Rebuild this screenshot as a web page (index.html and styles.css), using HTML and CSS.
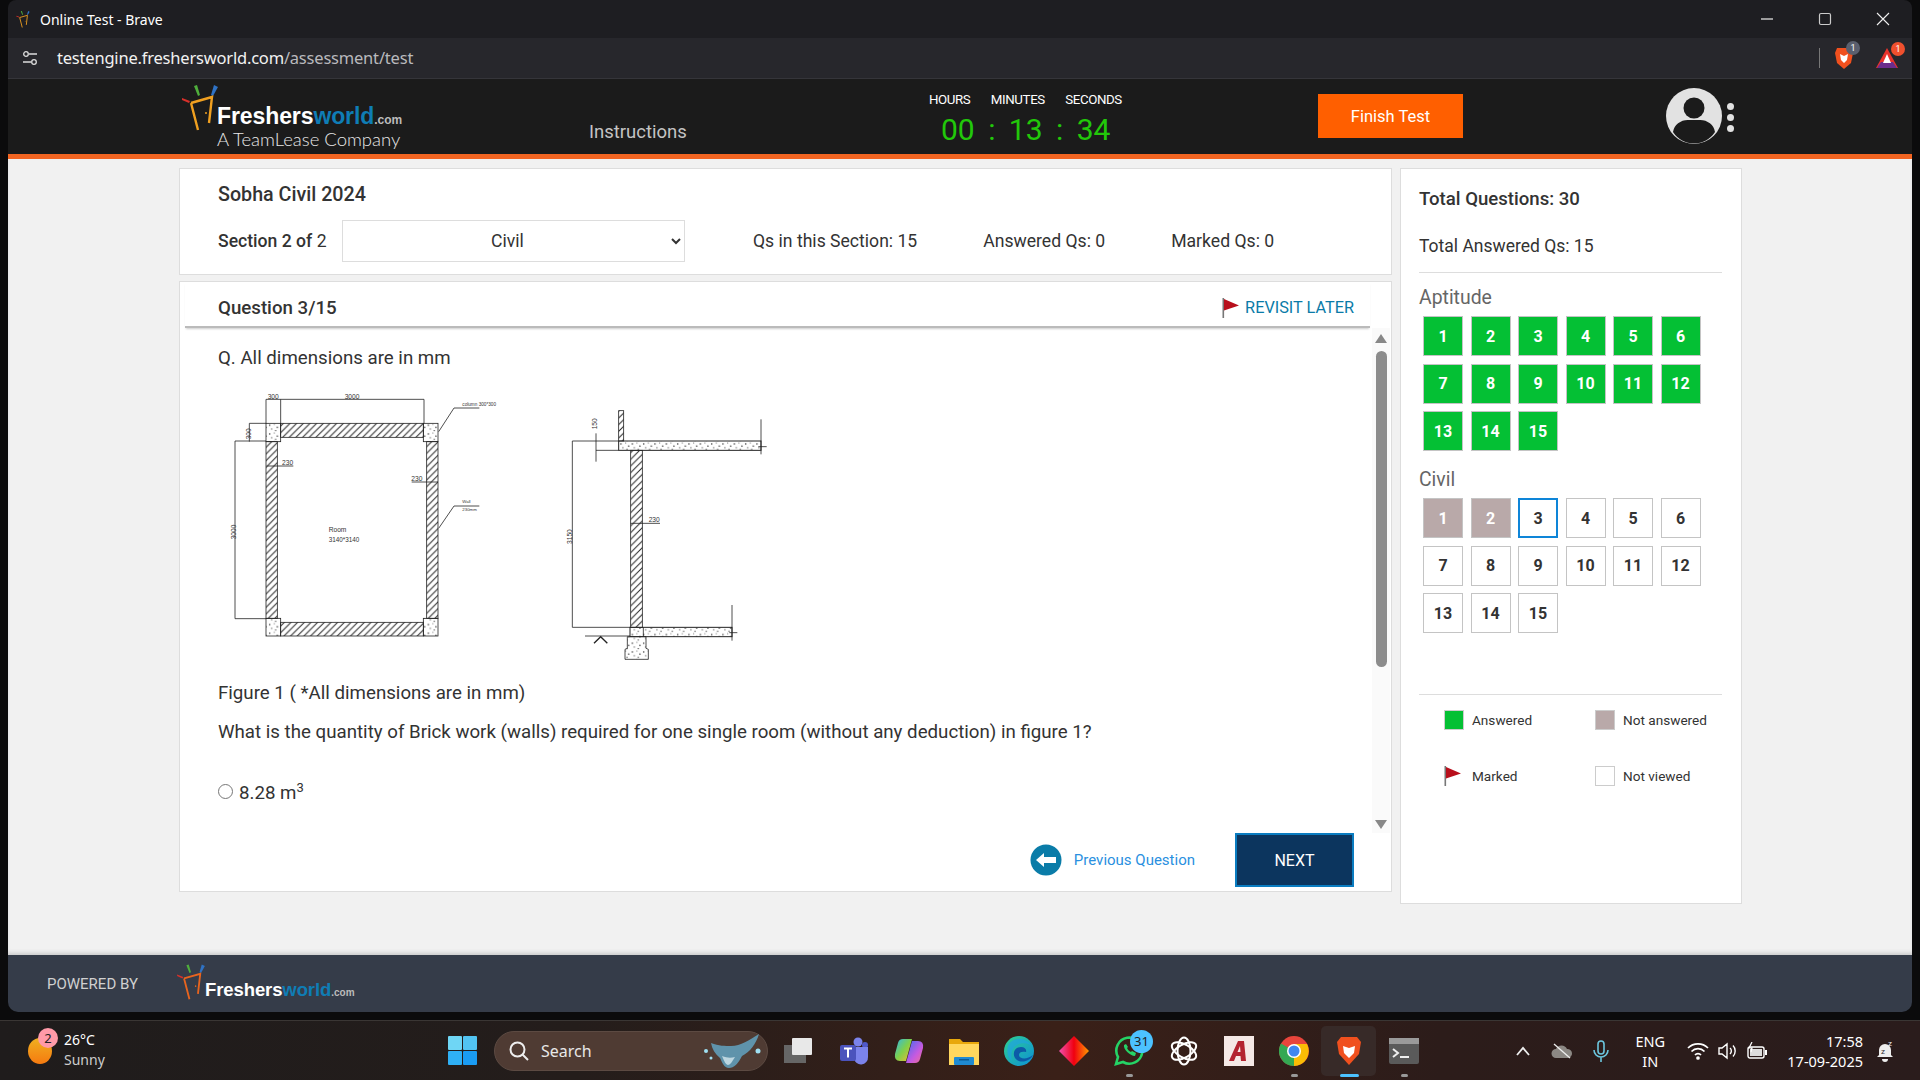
FILE: index.html
```html
<!DOCTYPE html>
<html lang="en">

<head>
    <meta charset="UTF-8">
    <meta name="viewport" content="width=device-width, initial-scale=1.0">
    <title>Online Test</title>
    <link rel="stylesheet" href="styles.css">
</head>

<body>
    <svg class="defs" width="0" height="0">
        <defs>
            <symbol id="door" viewBox="0 0 38 48">
                <path d="M1 15l8 3-1 2-7-3z" fill="#d8302a" />
                <path d="M13 3l3-1 3 10-2 1z" fill="#4fae3c" />
                <path d="M33 2l4 2-5 9-2-1z" fill="#2f72c4" />
                <path d="M10 20l7 27M10 20l21-6-3 26" fill="none" stroke="currentColor" stroke-width="2.4" />
                <circle cx="25" cy="30" r="1" fill="currentColor" />
            </symbol>
            <symbol id="flag" viewBox="0 0 17 20">
                <rect x="0.5" y="0" width="1.6" height="20" fill="#777" />
                <path d="M2 1l15 6.500-15 5z" fill="#b80f1c" />
            </symbol>
            <pattern id="hatch" patternUnits="userSpaceOnUse" width="20" height="20">
                <path d="M-2 22L22 -2M-2 2L2 -2M18 22L22 18" stroke="#222" stroke-width="3" />
            </pattern>
            <pattern id="speck" patternUnits="userSpaceOnUse" width="34" height="26">
                <circle cx="5" cy="6" r="2.200" fill="#222" />
                <circle cx="19" cy="3" r="1.600" fill="#444" />
                <circle cx="28" cy="12" r="2.200" fill="#222" />
                <circle cx="11" cy="17" r="1.800" fill="#444" />
                <circle cx="23" cy="22" r="2" fill="#222" />
            </pattern>
        </defs>
    </svg>

    <div class="window">
        <div class="titlebar">
            <svg class="tab-icon" width="14" height="20"><use href="#door" /></svg>
            <span class="tab-title">Online Test - Brave</span>
            <div class="win-controls">
                <svg width="14" height="14" viewBox="0 0 14 14"><path d="M1 7h12" stroke="#eee" stroke-width="1.200" /></svg>
                <svg width="14" height="14" viewBox="0 0 14 14"><rect x="1.500" y="1.500" width="11" height="11" rx="1.500" fill="none" stroke="#ccc" stroke-width="1.200" /></svg>
                <svg width="14" height="14" viewBox="0 0 14 14"><path d="M1 1l12 12M13 1L1 13" stroke="#eee" stroke-width="1.100" /></svg>
            </div>
        </div>

        <div class="addressbar">
            <svg class="site-icon" width="16" height="16" viewBox="0 0 16 16" fill="none" stroke="#ddd" stroke-width="1.300">
                <circle cx="4" cy="4" r="2.300" /><path d="M7 4h8M1 12h8" /><circle cx="12" cy="12" r="2.300" />
            </svg>
            <span class="url">testengine.freshersworld.com<span class="url-path">/assessment/test</span></span>
            <div class="ext-icons">
                <span class="ext-sep"></span>
                <div class="ext">
                    <svg width="20" height="24" viewBox="0 0 20 24"><path d="M3 2h14l2 5-2 10-7 6-7-6L1 7z" fill="#f0501e" /><path d="M6 8l4 2 4-2-1 6-3 3-3-3z" fill="#fff" /></svg>
                    <span class="ext-badge ext-badge-grey">1</span>
                </div>
                <div class="ext">
                    <svg width="24" height="22" viewBox="0 0 24 22"><path d="M12 1l11 20H1z" fill="#e8322c" /><path d="M2 21l4-6h12l4 6z" fill="#6b2d8c" /><path d="M12 7l4 9H8z" fill="#fff" /></svg>
                    <span class="ext-badge ext-badge-red">1</span>
                </div>
            </div>
        </div>

        <header class="app-header">
            <div class="logo">
                <svg class="logo-door" width="38" height="48"><use href="#door" /></svg>
                <div class="logo-text">
                    <div class="logo-name">Freshers<span class="blue">world</span><span class="dotcom">.com</span></div>
                    <div class="logo-sub">A TeamLease Company</div>
                </div>
            </div>
            <a class="instructions">Instructions</a>
            <div class="timer">
                <div class="timer-labels"><span>HOURS</span><span>MINUTES</span><span>SECONDS</span></div>
                <div class="timer-digits">00 : 13 : 34</div>
            </div>
            <button class="finish-btn">Finish Test</button>
            <svg class="avatar" width="56" height="56" viewBox="0 0 56 56">
                <circle cx="28" cy="28" r="28" fill="#e2e2e2" />
                <circle cx="28" cy="20" r="10.500" fill="#1b1b1b" />
                <path d="M7 44a15 14 0 0 1 15-12h12a15 14 0 0 1 15 12 25 25 0 0 1-42 0z" fill="#1b1b1b" />
            </svg>
            <div class="kebab"><i></i><i></i><i></i></div>
        </header>

        <div class="content">
            <div class="main-col">
                <section class="card test-info">
                    <h2 class="test-name">Sobha Civil 2024</h2>
                    <div class="section-row">
                        <span class="section-label"><b>Section 2 of</b> 2</span>
                        <select class="section-select"><option>Civil</option></select>
                        <span class="stat stat-first">Qs in this Section: 15</span>
                        <span class="stat">Answered Qs: 0</span>
                        <span class="stat">Marked Qs: 0</span>
                    </div>
                </section>

                <section class="card question">
                    <div class="q-head">
                        <h3>Question 3/15</h3>
                        <a class="revisit"><svg width="17" height="20"><use href="#flag" /></svg>REVISIT LATER</a>
                    </div>
                    <div class="q-body">
                        <div class="q-scroll">
                            <p class="q-line q-first">Q. All dimensions are in mm</p>
                            <div class="figures">
                                <svg class="fig-plan" width="320" height="280" viewBox="0 0 960 840" fill="none" stroke="#222" stroke-width="2.400">
                                    <rect x="242" y="130" width="428" height="42" fill="url(#hatch)" />
                                    <rect x="242" y="727" width="428" height="41" fill="url(#hatch)" />
                                    <rect x="198" y="185" width="34" height="530" fill="url(#hatch)" />
                                    <rect x="680" y="185" width="34" height="530" fill="url(#hatch)" />
                                    <rect x="198" y="130" width="44" height="55" fill="url(#speck)" />
                                    <rect x="670" y="130" width="44" height="55" fill="url(#speck)" />
                                    <rect x="198" y="715" width="44" height="53" fill="url(#speck)" />
                                    <rect x="670" y="715" width="44" height="53" fill="url(#speck)" />
                                    <path d="M198 130V58H672V130M242 58V130M148 130H198M148 130V185M105 183H198M105 183V716H198M200 258H280M635 306H714" />
                                    <path d="M716 155L762 84H838M716 445L762 378H838" />
                                    <g fill="#333" stroke="none">
                                        <text x="203" y="56" font-size="20">300</text>
                                        <text x="434" y="56" font-size="20">3000</text>
                                        <text x="246" y="255" font-size="20">230</text>
                                        <text x="634" y="304" font-size="20">230</text>
                                        <text transform="translate(152 178) rotate(-90)" font-size="20">300</text>
                                        <text transform="translate(107 478) rotate(-90)" font-size="20">3000</text>
                                        <text x="386" y="457" font-size="20">Room</text>
                                        <text x="386" y="487" font-size="19">3140*3140</text>
                                        <text x="787" y="77" font-size="14">column 300*300</text>
                                        <text x="787" y="368" font-size="13">Wall</text>
                                        <text x="787" y="392" font-size="13">230mm</text>
                                    </g>
                                </svg>
                                <svg class="fig-section" width="260" height="280" viewBox="0 0 780 840" fill="none" stroke="#222" stroke-width="2.400">
                                    <rect x="236" y="62" width="15" height="91" fill="url(#hatch)" />
                                    <rect x="236" y="153" width="427" height="28" fill="url(#speck)" stroke-width="3" />
                                    <rect x="272" y="181" width="35" height="531" fill="url(#hatch)" />
                                    <rect x="270" y="712" width="306" height="28" fill="url(#speck)" stroke-width="3" />
                                    <path d="M310 712V740" />
                                    <path d="M262 740H318V775L325 778V808H255V778L262 775Z" fill="url(#speck)" />
                                    <path d="M97 153V712M97 153H236M97 712H270M168 130V215M168 181H236M663 88V193M576 645V752M272 400H360M135 738H270" />
                                    <path d="M655 170H680M568 728H592" />
                                    <path d="M162 760L182 740L202 760" stroke-width="4" />
                                    <g fill="#333" stroke="none">
                                        <text x="326" y="397" font-size="20">230</text>
                                        <text transform="translate(170 118) rotate(-90)" font-size="20">150</text>
                                        <text transform="translate(97 462) rotate(-90)" font-size="20">3150</text>
                                    </g>
                                </svg>
                            </div>
                            <p class="q-line q-caption">Figure 1 ( *All dimensions are in mm)</p>
                            <p class="q-line q-text">What is the quantity of Brick work (walls) required for one single room (without any deduction) in figure 1?</p>
                            <label class="option"><input type="radio" name="answer"><span>8.28 m<sup>3</sup></span></label>
                        </div>
                        <div class="scrollbar">
                            <span class="arrow arrow-up"></span>
                            <span class="thumb"></span>
                            <span class="arrow arrow-down"></span>
                        </div>
                    </div>
                    <div class="q-actions">
                        <a class="prev">
                            <svg width="32" height="32" viewBox="0 0 32 32">
                                <circle cx="16" cy="16" r="15.500" fill="#0a7ca8" />
                                <path d="M6 16l8-7v4h12v6H14v4z" fill="#fff" />
                            </svg>
                            Previous Question
                        </a>
                        <button class="next-btn">NEXT</button>
                    </div>
                </section>
            </div>

            <aside class="card side">
                <div class="side-total">Total Questions: 30</div>
                <div class="side-answered">Total Answered Qs: 15</div>
                <hr class="side-rule">
                <div class="side-heading">Aptitude</div>
                <div class="q-grid">
                    <span class="q-box answered">1</span><span class="q-box answered">2</span><span class="q-box answered">3</span><span class="q-box answered">4</span><span class="q-box answered">5</span><span class="q-box answered">6</span>
                    <span class="q-box answered">7</span><span class="q-box answered">8</span><span class="q-box answered">9</span><span class="q-box answered">10</span><span class="q-box answered">11</span><span class="q-box answered">12</span>
                    <span class="q-box answered">13</span><span class="q-box answered">14</span><span class="q-box answered">15</span>
                </div>
                <div class="side-heading side-heading-civil">Civil</div>
                <div class="q-grid">
                    <span class="q-box skipped">1</span><span class="q-box skipped">2</span><span class="q-box current">3</span><span class="q-box">4</span><span class="q-box">5</span><span class="q-box">6</span>
                    <span class="q-box">7</span><span class="q-box">8</span><span class="q-box">9</span><span class="q-box">10</span><span class="q-box">11</span><span class="q-box">12</span>
                    <span class="q-box">13</span><span class="q-box">14</span><span class="q-box">15</span>
                </div>
                <hr class="side-rule side-rule-legend">
                <div class="legend">
                    <div class="legend-item"><span class="swatch swatch-green"></span>Answered</div>
                    <div class="legend-item"><span class="swatch swatch-grey"></span>Not answered</div>
                    <div class="legend-item"><svg width="17" height="20"><use href="#flag" /></svg><span class="legend-gap"></span>Marked</div>
                    <div class="legend-item"><span class="swatch"></span>Not viewed</div>
                </div>
            </aside>
        </div>

        <footer class="app-footer">
            <span class="powered">POWERED BY</span>
            <svg class="footer-door" width="30" height="37" viewBox="0 0 38 48"><use href="#door" /></svg>
            <div class="footer-name">Freshers<span class="blue">world</span><span class="dotcom">.com</span></div>
        </footer>
    </div>

    <div class="taskbar">
        <div class="weather">
            <span class="sun"></span>
            <span class="weather-badge">2</span>
            <div class="weather-text"><div>26°C</div><div class="muted">Sunny</div></div>
        </div>

        <div class="task-center">
            <svg class="start" width="29" height="29" viewBox="0 0 29 29">
                <rect width="14" height="14" rx="1" fill="#6fd6f5" /><rect x="15" width="14" height="14" rx="1" fill="#52c4f2" />
                <rect y="15" width="14" height="14" rx="1" fill="#2fb0f5" /><rect x="15" y="15" width="14" height="14" rx="1" fill="#1a9cf3" />
            </svg>
            <div class="search">
                <svg width="22" height="22" viewBox="0 0 22 22" fill="none" stroke="#eee" stroke-width="2"><circle cx="9.500" cy="9.500" r="7" /><path d="M14.500 14.500L20 20" /></svg>
                <span>Search</span>
                <svg class="manta" width="58" height="36" viewBox="0 0 58 36">
                    <path d="M8 10c8 3 14 3 20 3 10 0 18-6 28-12-3 10-9 18-17 22-4 8-8 12-13 12-5 0-7-6-9-10C12 21 9 16 8 10z" fill="#5f93ab" />
                    <path d="M19 23c5 2 9 2 13 1-3 5-5 8-7 8s-4-4-6-9z" fill="#bcd6e0" />
                    <circle cx="3" cy="18" r="2" fill="#9fe0f2" /><circle cx="55" cy="18" r="2.500" fill="#9fe0f2" /><circle cx="8" cy="25" r="1.500" fill="#9fe0f2" />
                </svg>
            </div>
            <div class="tasks">
                <div class="task"><svg width="30" height="28" viewBox="0 0 30 28"><rect x="0" y="8" width="22" height="18" fill="#666" /><rect x="8" y="1" width="20" height="17" rx="1" fill="#e8e8e8" /></svg></div>
                <div class="task"><svg width="30" height="30" viewBox="0 0 30 30"><circle cx="19" cy="6" r="4.500" fill="#7b83eb" /><circle cx="26" cy="9" r="3" fill="#5059c9" /><path d="M14 11h15v10a7 7 0 0 1-14 1z" fill="#7b83eb" /><rect x="1" y="9" width="16" height="16" rx="2" fill="#4b53bc" /><path d="M5 12.500h8M9 12.500v9" stroke="#fff" stroke-width="2" /></svg></div>
                <div class="task"><svg width="30" height="30" viewBox="0 0 30 30"><defs><linearGradient id="cop" x1="0" y1="0" x2="1" y2="1"><stop offset="0" stop-color="#2fb8e8" /><stop offset="0.500" stop-color="#7fd04a" /><stop offset="1" stop-color="#f5b832" /></linearGradient><linearGradient id="cop2" x1="0" y1="0" x2="1" y2="1"><stop offset="0" stop-color="#3f6cf0" /><stop offset="0.600" stop-color="#c65ae0" /><stop offset="1" stop-color="#f07090" /></linearGradient></defs><path d="M9 3h9l-6 22H6Q0 25 1 18L4 7q1-4 5-4z" fill="url(#cop)" /><path d="M21 27h-9l6-22h6q6 0 5 7l-3 11q-1 4-5 4z" fill="url(#cop2)" /></svg></div>
                <div class="task"><svg width="30" height="30" viewBox="0 0 30 30"><path d="M0 3h11l3 3h16v20H0z" fill="#e8a80c" /><rect y="8" width="30" height="21" fill="#ffd75e" /><rect x="5" y="21" width="20" height="8" rx="1" fill="#1f8ad2" /><rect x="10" y="23" width="10" height="1.500" fill="#0b5a94" /></svg></div>
                <div class="task"><svg width="30" height="30" viewBox="0 0 30 30"><defs><linearGradient id="edge" x1="0" y1="0" x2="1" y2="1"><stop offset="0" stop-color="#2fcf8f" /><stop offset="1" stop-color="#0c8fd8" /></linearGradient></defs><circle cx="15" cy="15" r="15" fill="url(#edge)" /><path d="M29 19c-3 7-14 9-18 3-3-5 0-11 6-11 4 0 6 3 5 5-4-1-7 0-7 3 0 4 8 5 14 0z" fill="#0c5aa8" /><path d="M5 8c4-6 16-8 23 2-5-4-15-4-19 3-2 4-2 8-1 12-5-4-6-12-3-17z" fill="#1fa3e0" opacity="0.700" /></svg></div>
                <div class="task"><svg width="30" height="30" viewBox="0 0 30 30"><defs><linearGradient id="dia" x1="0" y1="0" x2="1" y2="0"><stop offset="0" stop-color="#f050b0" /><stop offset="0.500" stop-color="#f00010" /><stop offset="1" stop-color="#ff9a00" /></linearGradient></defs><path d="M15 0l15 15-15 15L0 15z" fill="url(#dia)" /></svg></div>
                <div class="task task-open">
                    <svg width="30" height="30" viewBox="0 0 30 30" fill="none"><path d="M2 28l2-7a13 13 0 1 1 5 5z" stroke="#25d366" stroke-width="2.600" /><path d="M10 9c-1 4 6 11 11 11l1-3-4-2-1 1c-2-1-3-2-4-4l1-1-2-3z" fill="#25d366" /></svg>
                    <span class="wa-badge">31</span>
                </div>
                <div class="task"><svg width="30" height="30" viewBox="-15 -15 30 30" fill="none" stroke="#fff" stroke-width="2"><ellipse rx="6.500" ry="13.500" /><ellipse rx="6.500" ry="13.500" transform="rotate(60)" /><ellipse rx="6.500" ry="13.500" transform="rotate(120)" /></svg></div>
                <div class="task"><svg width="30" height="30" viewBox="0 0 30 30"><rect width="30" height="30" fill="#f5e9e6" /><path d="M5 25L14 5h6l2 20h-5l-.500-5H12l-2 5zM13.500 16h3l-.500-6z" fill="#b32430" /></svg></div>
                <div class="task task-open"><svg width="30" height="30" viewBox="0 0 30 30"><circle cx="15" cy="15" r="15" fill="#e8453c" /><path d="M15 15L15 30A15 15 0 0 1 2 7.500z" fill="#34a853" /><path d="M15 8h13A15 15 0 0 1 15 30z" fill="#fbbc05" /><circle cx="15" cy="15" r="7" fill="#fff" /><circle cx="15" cy="15" r="5.500" fill="#3f87f0" /></svg></div>
                <div class="task task-active"><svg width="26" height="30" viewBox="0 0 26 30"><path d="M5 1h16l4 5-2 12-10 11L3 18 1 6z" fill="#f0501e" /><path d="M7 10l6 2 6-2-1 7-5 5-5-5z" fill="#fff" /></svg></div>
                <div class="task task-open"><svg width="30" height="26" viewBox="0 0 30 26"><rect width="30" height="26" rx="2" fill="#5a5a5a" /><rect width="30" height="6" fill="#9a9a9a" /><path d="M4 11l5 4-5 4" fill="none" stroke="#eee" stroke-width="2" /><path d="M11 19h9" stroke="#eee" stroke-width="2" /></svg></div>
            </div>
        </div>

        <div class="tray">
            <svg width="16" height="10" viewBox="0 0 16 10" fill="none" stroke="#eee" stroke-width="1.800"><path d="M2 9l6-7 6 7" /></svg>
            <svg class="tray-cloud" width="22" height="16" viewBox="0 0 22 16"><path d="M5 15a4.500 4.500 0 0 1 0-9 6 6 0 0 1 11 0 4.500 4.500 0 0 1 1 9z" fill="#8c8884" /><path d="M3 1l16 14" stroke="#eee" stroke-width="1.300" /></svg>
            <svg class="tray-mic" width="16" height="22" viewBox="0 0 16 22" fill="none" stroke="#6cc6de" stroke-width="1.600"><rect x="5" y="1" width="6" height="13" rx="3" /><path d="M1 10a7 7 0 0 0 14 0M8 17v5" /></svg>
            <div class="lang"><div>ENG</div><div>IN</div></div>
            <svg class="tray-wifi" width="22" height="18" viewBox="0 0 22 18" fill="none" stroke="#fff" stroke-width="1.700"><path d="M1 6a14 14 0 0 1 20 0M4.500 9.500a9 9 0 0 1 13 0M8 13a4 4 0 0 1 6 0" /><circle cx="11" cy="16" r="1" fill="#fff" /></svg>
            <svg class="tray-vol" width="20" height="18" viewBox="0 0 20 18" fill="none" stroke="#fff" stroke-width="1.400"><path d="M1 6h3l5-4v14l-5-4H1zM12 6a4 4 0 0 1 0 6M15 3.500a8 8 0 0 1 0 11" /></svg>
            <svg class="tray-bat" width="20" height="18" viewBox="0 0 20 18"><rect x="1" y="5" width="16" height="11" rx="2" fill="none" stroke="#fff" stroke-width="1.400" /><rect x="3" y="7" width="12" height="7" fill="#ddd" /><rect x="18" y="8" width="2" height="5" fill="#fff" /><path d="M5 0L2 6h3l-1 4" fill="none" stroke="#fff" stroke-width="1.200" /></svg>
            <div class="clock"><div>17:58</div><div>17-09-2025</div></div>
            <svg class="tray-bell" width="18" height="22" viewBox="0 0 18 22"><path d="M9 4a6 6 0 0 1 6 6v5l2 2H1l2-2v-5a6 6 0 0 1 6-6z" fill="#eee" /><path d="M6 19h6a3 3 0 0 1-6 0z" fill="#eee" /><text x="5" y="14" font-size="8" font-family="Roboto" fill="#333">z</text><text x="12" y="6" font-size="8" font-family="Roboto" fill="#eee">z</text></svg>
        </div>
    </div>
</body>

</html>
```

FILE: styles.css
```css
* {
    box-sizing: border-box;
}

html,
body {
    margin: 0;
    padding: 0;
    width: 1920px;
    height: 1080px;
    overflow: hidden;
}

body {
    background: #0b0b0c;
    font-family: Roboto, sans-serif;
    color: #333;
}

.defs {
    display: block;
    position: absolute;
}

.blue {
    color: #0f7db5;
}

.window {
    width: 1904px;
    height: 1012px;
    margin-left: 8px;
    display: flex;
    flex-direction: column;
    border-radius: 8px 8px 10px 10px;
    overflow: hidden;
}

/* browser chrome */
.titlebar {
    height: 38px;
    background: #1e1e22;
    display: flex;
    align-items: center;
    padding-left: 8px;
    color: #fff;
    font-family: "Noto Sans", sans-serif;
    font-size: 14px;
}

.tab-icon {
    color: #f0a020;
}

.tab-title {
    margin-left: 10px;
}

.win-controls {
    margin-left: auto;
    margin-right: 22px;
    display: flex;
    gap: 44px;
}

.addressbar {
    height: 41px;
    background: #27272c;
    border-bottom: 1px solid #35353a;
    display: flex;
    align-items: center;
    padding-left: 14px;
}

.url {
    margin-left: 19px;
    margin-top: -2px;
    font-family: "Noto Sans", sans-serif;
    font-size: 16.500px;
    letter-spacing: -0.2px;
    color: #f2f2f2;
}

.url-path {
    color: #b9b9bd;
}

.ext-icons {
    margin-left: auto;
    margin-right: 13px;
    display: flex;
    align-items: center;
}

.ext-sep {
    width: 1px;
    height: 20px;
    background: #777;
    margin-right: 14px;
}

.ext {
    position: relative;
    display: flex;
    margin-right: 21px;
}

.ext:last-child {
    margin-right: 0;
}

.ext-badge {
    position: absolute;
    top: -5px;
    right: -6px;
    width: 14px;
    height: 14px;
    border-radius: 50%;
    font-size: 9px;
    line-height: 14px;
    text-align: center;
    color: #fff;
}

.ext-badge-grey {
    background: #5a5f6e;
}

.ext-badge-red {
    background: #f0502e;
}

/* app header */
.app-header {
    height: 80px;
    background: #1b1b1b;
    border-bottom: 5px solid #f26522;
    display: flex;
    align-items: flex-start;
    color: #fff;
}

.logo {
    display: flex;
    margin-left: 173px;
    margin-top: 4px;
    width: 408px;
}

.logo-door {
    color: #f0a020;
    flex-shrink: 0;
}

.logo-text {
    margin-left: -2px;
    margin-top: 20px;
}

.logo-name {
    font-family: "Liberation Sans", sans-serif;
    font-weight: bold;
    font-size: 23px;
    line-height: 26px;
    letter-spacing: -0.1px;
}

.dotcom {
    font-size: 12px;
    color: #bbb;
    font-weight: bold;
    letter-spacing: 0;
}

.logo-sub {
    margin-top: -6px;
    font-family: Lato, sans-serif;
    font-weight: 300;
    font-size: 18.500px;
    line-height: 24px;
    color: #e8e8e8;
    white-space: nowrap;
}

.instructions {
    margin-top: 41px;
    font-size: 18.500px;
    line-height: 24px;
    color: #c4c4c4;
    width: 339px;
}

.timer {
    width: 195px;
    margin-top: 13px;
    margin-left: 1px;
    text-align: left;
}

.timer-labels {
    display: flex;
    gap: 20.500px;
    font-size: 13.300px;
    line-height: 16px;
    letter-spacing: -0.4px;
}

.timer-digits {
    margin-top: 5px;
    margin-left: 12px;
    font-size: 30px;
    line-height: 34px;
    color: #22c80a;
    white-space: pre;
    word-spacing: 6px;
}

.finish-btn {
    margin-left: 194px;
    margin-top: 15px;
    width: 145px;
    height: 44px;
    background: #ff5f00;
    border: none;
    color: #fff;
    font-family: Roboto, sans-serif;
    font-size: 16.500px;
}

.avatar {
    margin-left: 203px;
    margin-top: 9px;
}

.kebab {
    margin-left: 5px;
    margin-top: 24px;
    display: flex;
    flex-direction: column;
    gap: 4px;
}

.kebab i {
    display: block;
    width: 7px;
    height: 7px;
    border-radius: 50%;
    background: #e2e2e2;
}

/* page body */
.content {
    height: 796px;
    background: #f1f1f1;
    padding: 9px 0 0 171px;
    display: flex;
    align-items: flex-start;
    gap: 8px;
    box-shadow: inset 0 -4px 4px -2px #c9c9c9;
}

.main-col {
    width: 1213px;
    display: flex;
    flex-direction: column;
    gap: 6px;
}

.card {
    background: #fff;
    border: 1px solid #ddd;
}

.test-info {
    height: 107px;
    padding: 14px 0 0 38px;
}

.test-name {
    margin: 0;
    font-size: 19.700px;
    line-height: 24px;
    font-weight: 500;
    color: #333;
}

.section-row {
    margin-top: 13px;
    display: flex;
    align-items: center;
    font-size: 17.600px;
}

.section-label {
    width: 124px;
}

.section-label b {
    font-weight: 500;
}

.section-select {
    width: 343px;
    height: 42px;
    border: 1px solid #ddd;
    background: #fff;
    font-family: Roboto, sans-serif;
    font-size: 17.600px;
    color: #333;
    text-align: center;
}

.stat {
    margin-left: 66px;
}

.stat-first {
    margin-left: 68px;
}

.question {
    height: 611px;
    display: flex;
    flex-direction: column;
}

.q-head {
    height: 46px;
    margin: 0 21px 0 5px;
    padding: 7px 0 0 33px;
    display: flex;
    align-items: center;
    justify-content: space-between;
    border-bottom: 2px solid #bbb;
    box-shadow: 0 2px 2px -1px #ccc;
}

.q-head h3 {
    margin: 0;
    font-size: 18.700px;
    font-weight: 500;
}

.revisit {
    display: flex;
    align-items: center;
    gap: 6px;
    font-size: 16.300px;
    color: #0a7ba8;
    margin-right: 16px;
}

.q-body {
    height: 505px;
    display: flex;
}

.q-scroll {
    flex: 1;
    padding-left: 38px;
    overflow: hidden;
}

.q-line {
    margin: 0;
    font-size: 18.700px;
    line-height: 24px;
}

.q-first {
    margin-top: 18px;
}

.figures {
    display: flex;
    align-items: flex-start;
    margin-top: 10px;
    margin-left: -18px;
    height: 280px;
}

.fig-section {
    margin-left: 20px;
    margin-top: 10px;
}

.figures text {
    font-family: "Liberation Sans", sans-serif;
}

.q-caption {
    margin-top: 21px;
}

.q-text {
    margin-top: 15px;
}

.option {
    display: flex;
    align-items: center;
    margin-top: 37px;
    font-size: 18.700px;
    line-height: 24px;
}

.option input {
    width: 15px;
    height: 15px;
    margin: -3px 6px 0 0;
}

.option sup {
    font-size: 13px;
    line-height: 0;
}

.scrollbar {
    width: 18px;
    margin-right: 1px;
    background: #fafafa;
    display: flex;
    flex-direction: column;
    align-items: center;
}

.arrow {
    width: 0;
    height: 0;
    border-left: 6px solid transparent;
    border-right: 6px solid transparent;
}

.arrow-up {
    margin-top: 6px;
    border-bottom: 9px solid #888;
}

.arrow-down {
    margin-top: 153px;
    border-top: 9px solid #888;
}

.thumb {
    width: 11px;
    height: 316px;
    margin-top: 8px;
    border-radius: 6px;
    background: #8c8c8c;
}

.q-actions {
    height: 58px;
    display: flex;
    align-items: flex-start;
    justify-content: flex-end;
    padding-right: 37px;
}

.prev {
    display: flex;
    align-items: center;
    gap: 12px;
    height: 54px;
    margin-right: 40px;
    font-size: 15px;
    color: #2a90e0;
}

.next-btn {
    width: 119px;
    height: 54px;
    background: #0c355e;
    border: 2px solid #0a7cc0;
    color: #fff;
    font-family: Roboto, sans-serif;
    font-size: 16px;
}

/* right panel */
.side {
    width: 342px;
    height: 736px;
    padding: 18px 19px 0 18px;
}

.side-total {
    font-size: 18.600px;
    line-height: 24px;
    font-weight: 500;
}

.side-answered {
    margin-top: 23px;
    font-size: 17.500px;
    line-height: 24px;
}

.side-rule {
    border: none;
    border-top: 1px solid #ddd;
    margin: 14px 0 0;
}

.side-rule-legend {
    margin-top: 61px;
}

.side-heading {
    margin-top: 13px;
    font-size: 19.400px;
    line-height: 24px;
    color: #666;
}

.side-heading-civil {
    margin-top: 17px;
}

.q-grid {
    margin: 6px 0 0 4px;
    display: grid;
    grid-template-columns: repeat(6, 40px);
    grid-auto-rows: 40px;
    gap: 7.500px;
}

.q-box {
    border: 1px solid #c4c4c4;
    display: flex;
    align-items: center;
    justify-content: center;
    font-size: 16px;
    font-weight: 700;
    color: #333;
    background: #fff;
}

.q-box.answered {
    background: #04c034;
    color: #fff;
}

.q-box.skipped {
    background: #b9a9a9;
    color: #fff;
}

.q-box.current {
    border: 2px solid #0e85d8;
}

.legend {
    margin: 15px 0 0 25px;
    display: grid;
    grid-template-columns: 151px 1fr;
    grid-auto-rows: 20px;
    row-gap: 36px;
}

.legend-item {
    display: flex;
    align-items: center;
    font-size: 13.600px;
    color: #333;
}

.legend-gap {
    width: 11px;
}

.swatch {
    width: 20px;
    height: 20px;
    border: 1px solid #ccc;
    margin-right: 8px;
    background: #fff;
}

.swatch-green {
    background: #04c034;
}

.swatch-grey {
    background: #b9a9a9;
}

/* site footer */
.app-footer {
    height: 57px;
    background: #353c49;
    display: flex;
    align-items: center;
    padding-left: 39px;
    color: #fff;
}

.powered {
    font-size: 15px;
    color: #d0d0d0;
    width: 129px;
}

.footer-door {
    color: #e8641e;
    margin-top: -5px;
}

.footer-name {
    margin-top: 12px;
    margin-left: -1px;
    font-family: "Liberation Sans", sans-serif;
    font-weight: bold;
    font-size: 18.500px;
    letter-spacing: -0.1px;
}

.footer-name .dotcom {
    font-size: 10px;
}

/* windows taskbar */
.taskbar {
    height: 60px;
    margin-top: 8px;
    border-top: 1px solid #3a3634;
    background: linear-gradient(90deg, #1f1c1c 0%, #241d1b 30%, #3a2018 55%, #2c1c1a 75%, #2a1c1c 100%);
    display: flex;
    align-items: center;
    position: relative;
    color: #fff;
    font-family: "Noto Sans", sans-serif;
}

.weather {
    width: 448px;
    height: 100%;
    padding-left: 28px;
    display: flex;
    align-items: center;
    position: relative;
    flex-shrink: 0;
}

.sun {
    width: 24px;
    height: 26px;
    border-radius: 50%;
    background: linear-gradient(#f0b020, #f57a10);
}

.weather-badge {
    position: absolute;
    left: 38px;
    top: 7px;
    width: 20px;
    height: 20px;
    border-radius: 50%;
    background: #ff9aa8;
    color: #222;
    font-size: 13px;
    line-height: 20px;
    text-align: center;
}

.weather-text {
    margin-left: 12px;
    margin-top: -2px;
    font-size: 14px;
    line-height: 20px;
}

.muted {
    color: #ccc;
}

.task-center {
    display: flex;
    align-items: center;
}

.search {
    width: 274px;
    height: 40px;
    margin-left: 17px;
    border-radius: 20px;
    border: 1px solid #5c4a42;
    background: #4f3b33;
    display: flex;
    align-items: center;
    padding-left: 13px;
    font-size: 16px;
    color: #e8e8e8;
}

.search span {
    margin-left: 11px;
}

.manta {
    margin-left: auto;
    margin-right: 6px;
}

.tasks {
    display: flex;
    margin-left: 3px;
}

.task {
    width: 55px;
    height: 50px;
    display: flex;
    align-items: center;
    justify-content: center;
    position: relative;
}

.task-open::after,
.task-active::after {
    content: "";
    position: absolute;
    bottom: -1px;
    left: 50%;
    width: 7px;
    height: 3px;
    margin-left: -3px;
    border-radius: 2px;
    background: #999;
}

.task-active {
    background: #372a28;
    border-radius: 5px;
}

.task-active::after {
    width: 19px;
    margin-left: -9px;
    background: #4cc2ff;
}

.wa-badge {
    position: absolute;
    top: 4px;
    left: 29px;
    width: 23px;
    height: 23px;
    border-radius: 50%;
    background: #4cc2ff;
    color: #222;
    font-size: 13px;
    line-height: 23px;
    text-align: center;
}

.tray {
    position: absolute;
    right: 26px;
    top: 0;
    height: 100%;
    display: flex;
    align-items: center;
}

.tray-cloud {
    margin-left: 20px;
}

.tray-mic {
    margin-left: 20px;
}

.lang {
    margin-left: 19px;
    width: 44px;
    text-align: center;
    font-size: 14.500px;
    line-height: 20px;
}

.tray-wifi {
    margin-left: 15px;
}

.tray-vol {
    margin-left: 9px;
}

.tray-bat {
    margin-left: 9px;
}

.clock {
    margin-left: 20px;
    text-align: right;
    font-size: 14.500px;
    line-height: 20px;
}

.tray-bell {
    margin-left: 13px;
}
```
